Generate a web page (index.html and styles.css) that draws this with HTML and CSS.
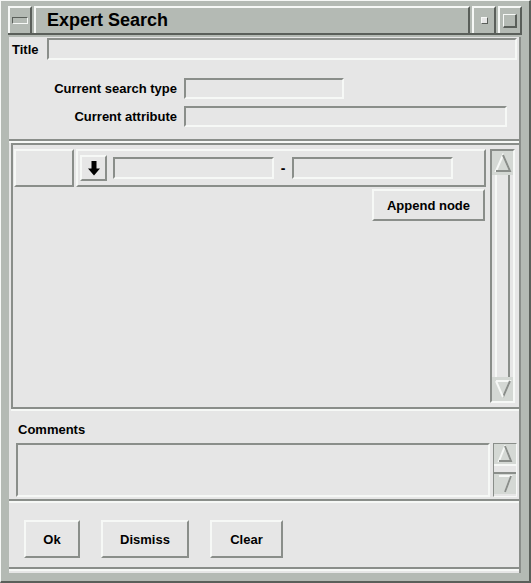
FILE: index.html
```html
<!DOCTYPE html>
<html lang="en">
<head>
    <meta charset="UTF-8">
    <title>Expert Search</title>
    <link rel="stylesheet" href="styles.css">
</head>
<body>
    <div class="frame">
        <div class="titlebar">
            <div class="wm-btn menu-btn"><span class="menu-glyph"></span></div>
            <div class="title-text">Expert Search</div>
            <div class="wm-btn min-btn"><span class="min-glyph"></span></div>
            <div class="wm-btn max-btn"><span class="max-glyph"></span></div>
        </div>

        <div class="content">
            <!-- header fields -->
            <div class="panel panel-info">
                <div class="title-row">
                    <label class="lbl">Title</label>
                    <div class="field title-field"></div>
                </div>
                <div class="info-row row-type">
                    <label class="lbl lbl-right">Current search type</label>
                    <div class="field type-field"></div>
                </div>
                <div class="info-row row-attr">
                    <label class="lbl lbl-right">Current attribute</label>
                    <div class="field attr-field"></div>
                </div>
            </div>

            <!-- node tree -->
            <div class="panel panel-tree">
                <div class="tree-area">
                    <div class="node-row">
                        <div class="cell cell-left"></div>
                        <div class="cell cell-right">
                            <div class="btn arrow-btn">
                                <svg width="12" height="15" viewBox="0 0 12 15"><path d="M3.5 0h5v7.5h3.5l-6 7-6-7h3.5z" fill="#000"/></svg>
                            </div>
                            <div class="field range-field"></div>
                            <span class="dash">-</span>
                            <div class="field range-field"></div>
                        </div>
                    </div>
                    <div class="append-row">
                        <div class="btn append-btn">Append node</div>
                    </div>
                </div>
                <div class="scrollbar tree-scroll">
                    <div class="sb-arrow sb-up">
                        <svg width="20" height="20" viewBox="0 0 20 20"><path d="M10 2L3 18h14z" fill="none" stroke="#f6f8f6" stroke-width="2"/><path d="M3 18h14L10 2" fill="none" stroke="#8a8e8a" stroke-width="2"/></svg>
                    </div>
                    <div class="sb-track"></div>
                    <div class="sb-arrow sb-down">
                        <svg width="20" height="20" viewBox="0 0 20 20"><path d="M3 2h14L10 18" fill="none" stroke="#f6f8f6" stroke-width="2"/><path d="M17 2L10 18" fill="none" stroke="#8a8e8a" stroke-width="2"/><path d="M3 2L10 18" fill="none" stroke="#f6f8f6" stroke-width="2"/></svg>
                    </div>
                </div>
            </div>

            <!-- comments -->
            <div class="panel panel-comments">
                <label class="lbl comments-lbl">Comments</label>
                <div class="comments-row">
                    <div class="field comments-field"></div>
                    <div class="scrollbar small-scroll">
                        <div class="sb-arrow sb-up small">
                            <svg width="18" height="18" viewBox="0 0 18 18"><path d="M9 1L3 16h12z" fill="none" stroke="#f6f8f6" stroke-width="2"/><path d="M3 16h12L9 1" fill="none" stroke="#8a8e8a" stroke-width="2"/></svg>
                        </div>
                        <div class="sb-thumb"></div>
                        <div class="sb-arrow sb-down small">
                            <svg width="18" height="18" viewBox="0 0 18 18"><path d="M3 1h12L9 17" fill="none" stroke="#f6f8f6" stroke-width="2"/><path d="M15 1L9 17" fill="none" stroke="#8a8e8a" stroke-width="2"/></svg>
                        </div>
                    </div>
                </div>
            </div>

            <!-- actions -->
            <div class="panel panel-actions">
                <div class="btn action-btn ok-btn">Ok</div>
                <div class="btn action-btn dismiss-btn">Dismiss</div>
                <div class="btn action-btn clear-btn">Clear</div>
            </div>
        </div>
    </div>
</body>
</html>
```

FILE: styles.css
```css
* {
    margin: 0;
    padding: 0;
    box-sizing: border-box;
}

body {
    width: 531px;
    height: 583px;
    overflow: hidden;
    font-family: 'Liberation Sans', Arial, sans-serif;
    font-weight: bold;
    font-size: 13px;
    color: #000;
    background-color: #b4bab4;
}

.frame {
    width: 531px;
    height: 583px;
    padding: 5px 8px 8px 8px;
    background-color: #b4bab4;
    border-top: 1px solid #f6f8f6;
    border-left: 1px solid #f6f8f6;
    border-right: 2px solid #5a5f5a;
    border-bottom: 2px solid #5a5f5a;
    display: flex;
    flex-direction: column;
}

/* window manager title bar */
.titlebar {
    height: 29px;
    display: flex;
    align-items: stretch;
    gap: 2px;
    margin: 0 -1px 2px -1px;
    border-bottom: 2px solid #5a5f5a;
}

.wm-btn {
    width: 24px;
    background-color: #b4bab4;
    border-top: 2px solid #f6f8f6;
    border-left: 2px solid #f6f8f6;
    border-right: 2px solid #5a5f5a;
    display: flex;
    align-items: center;
    justify-content: center;
}

.menu-glyph {
    width: 16px;
    height: 7px;
    border-top: 1px solid #5a5f5a;
    border-left: 1px solid #5a5f5a;
    border-bottom: 1px solid #f6f8f6;
    border-right: 1px solid #f6f8f6;
}

.min-glyph {
    width: 7px;
    height: 7px;
    background: #e6e6e6;
    border-top: 1px solid #f6f8f6;
    border-left: 1px solid #f6f8f6;
    border-bottom: 1px solid #5a5f5a;
    border-right: 1px solid #5a5f5a;
}

.max-glyph {
    width: 14px;
    height: 14px;
    border-top: 1px solid #f6f8f6;
    border-left: 1px solid #f6f8f6;
    border-bottom: 2px solid #5a5f5a;
    border-right: 2px solid #5a5f5a;
}

.title-text {
    flex: 1;
    padding-left: 11px;
    font-size: 18px;
    line-height: 25px;
    background-color: #b4bab4;
    border-top: 2px solid #f6f8f6;
    border-left: 2px solid #f6f8f6;
    border-right: 2px solid #5a5f5a;
}

/* content */
.content {
    flex: 1;
    background-color: #e6e6e6;
    display: flex;
    flex-direction: column;
    border-right: 2px solid #8a8e8a;
}

.panel {
    border-bottom: 2px solid #8a8e8a;
    box-shadow: 0 2px 0 #f6f8f6;
    margin-bottom: 2px;
}

.lbl {
    display: block;
    white-space: nowrap;
}

.field {
    background-color: #e6e6e6;
    border-top: 2px solid #8a8e8a;
    border-left: 2px solid #8a8e8a;
    border-bottom: 2px solid #f6f8f6;
    border-right: 2px solid #f6f8f6;
}

.btn {
    background-color: #e6e6e6;
    border-top: 2px solid #f6f8f6;
    border-left: 2px solid #f6f8f6;
    border-bottom: 2px solid #8a8e8a;
    border-right: 2px solid #8a8e8a;
    display: flex;
    align-items: center;
    justify-content: center;
}

/* header fields */
.panel-info {
    height: 104px;
    padding: 1px 2px 0 3px;
}

.title-row {
    display: flex;
    align-items: center;
    gap: 8px;
}

.title-field {
    flex: 1;
    height: 22px;
}

.info-row {
    display: flex;
    align-items: center;
    gap: 7px;
}

.row-type {
    margin-top: 18px;
}

.row-attr {
    margin-top: 7px;
}

.lbl-right {
    width: 165px;
    text-align: right;
}

.type-field {
    width: 160px;
    height: 21px;
}

.attr-field {
    width: 323px;
    height: 21px;
}

/* node tree */
.panel-tree {
    height: 266px;
    margin-left: 2px;
    padding: 4px 4px 4px 1px;
    border-top: 2px solid #8a8e8a;
    border-left: 2px solid #8a8e8a;
    display: flex;
    gap: 4px;
}

.tree-area {
    flex: 1;
}

.node-row {
    display: flex;
    gap: 2px;
    height: 38px;
}

.cell {
    border-top: 2px solid #f6f8f6;
    border-left: 2px solid #f6f8f6;
    border-bottom: 2px solid #8a8e8a;
    border-right: 2px solid #8a8e8a;
}

.cell-left {
    width: 60px;
}

.cell-right {
    flex: 1;
    display: flex;
    align-items: center;
    padding-left: 2px;
    gap: 6px;
}

.arrow-btn {
    width: 27px;
    height: 26px;
}

.range-field {
    width: 161px;
    height: 22px;
}

.dash {
    font-size: 14px;
    width: 6px;
    text-align: center;
}

.append-row {
    display: flex;
    justify-content: flex-end;
    padding-top: 2px;
    padding-right: 1px;
}

.append-btn {
    width: 113px;
    height: 32px;
}

.scrollbar {
    background-color: #e6e6e6;
    border-top: 2px solid #8a8e8a;
    border-left: 2px solid #8a8e8a;
    border-bottom: 2px solid #f6f8f6;
    border-right: 2px solid #f6f8f6;
    display: flex;
    flex-direction: column;
}

.tree-scroll {
    width: 25px;
}

.sb-arrow {
    height: 24px;
    background-color: #d4d8d4;
    display: flex;
    align-items: center;
    justify-content: center;
}

.sb-arrow.small {
    height: 20px;
}

.sb-track {
    flex: 1;
    margin: 0 3px;
    border-left: 2px solid #f6f8f6;
    border-right: 2px solid #8a8e8a;
}

/* comments */
.panel-comments {
    height: 90px;
    padding: 11px 2px 0 7px;
}

.comments-lbl {
    height: 21px;
    margin-left: 2px;
}

.comments-row {
    display: flex;
    gap: 3px;
}

.comments-field {
    flex: 1;
    height: 54px;
}

.small-scroll {
    width: 24px;
    height: 54px;
    border-width: 1px;
}

.sb-thumb {
    height: 10px;
    border-top: 2px solid #f6f8f6;
    border-bottom: 2px solid #8a8e8a;
}

/* actions */
.panel-actions {
    flex: 1;
    margin-bottom: 4px;
    padding: 17px 0 0 15px;
    display: flex;
    align-items: flex-start;
    gap: 21px;
}

.action-btn {
    height: 38px;
}

.ok-btn {
    width: 56px;
}

.dismiss-btn {
    width: 88px;
}

.clear-btn {
    width: 73px;
}
```
